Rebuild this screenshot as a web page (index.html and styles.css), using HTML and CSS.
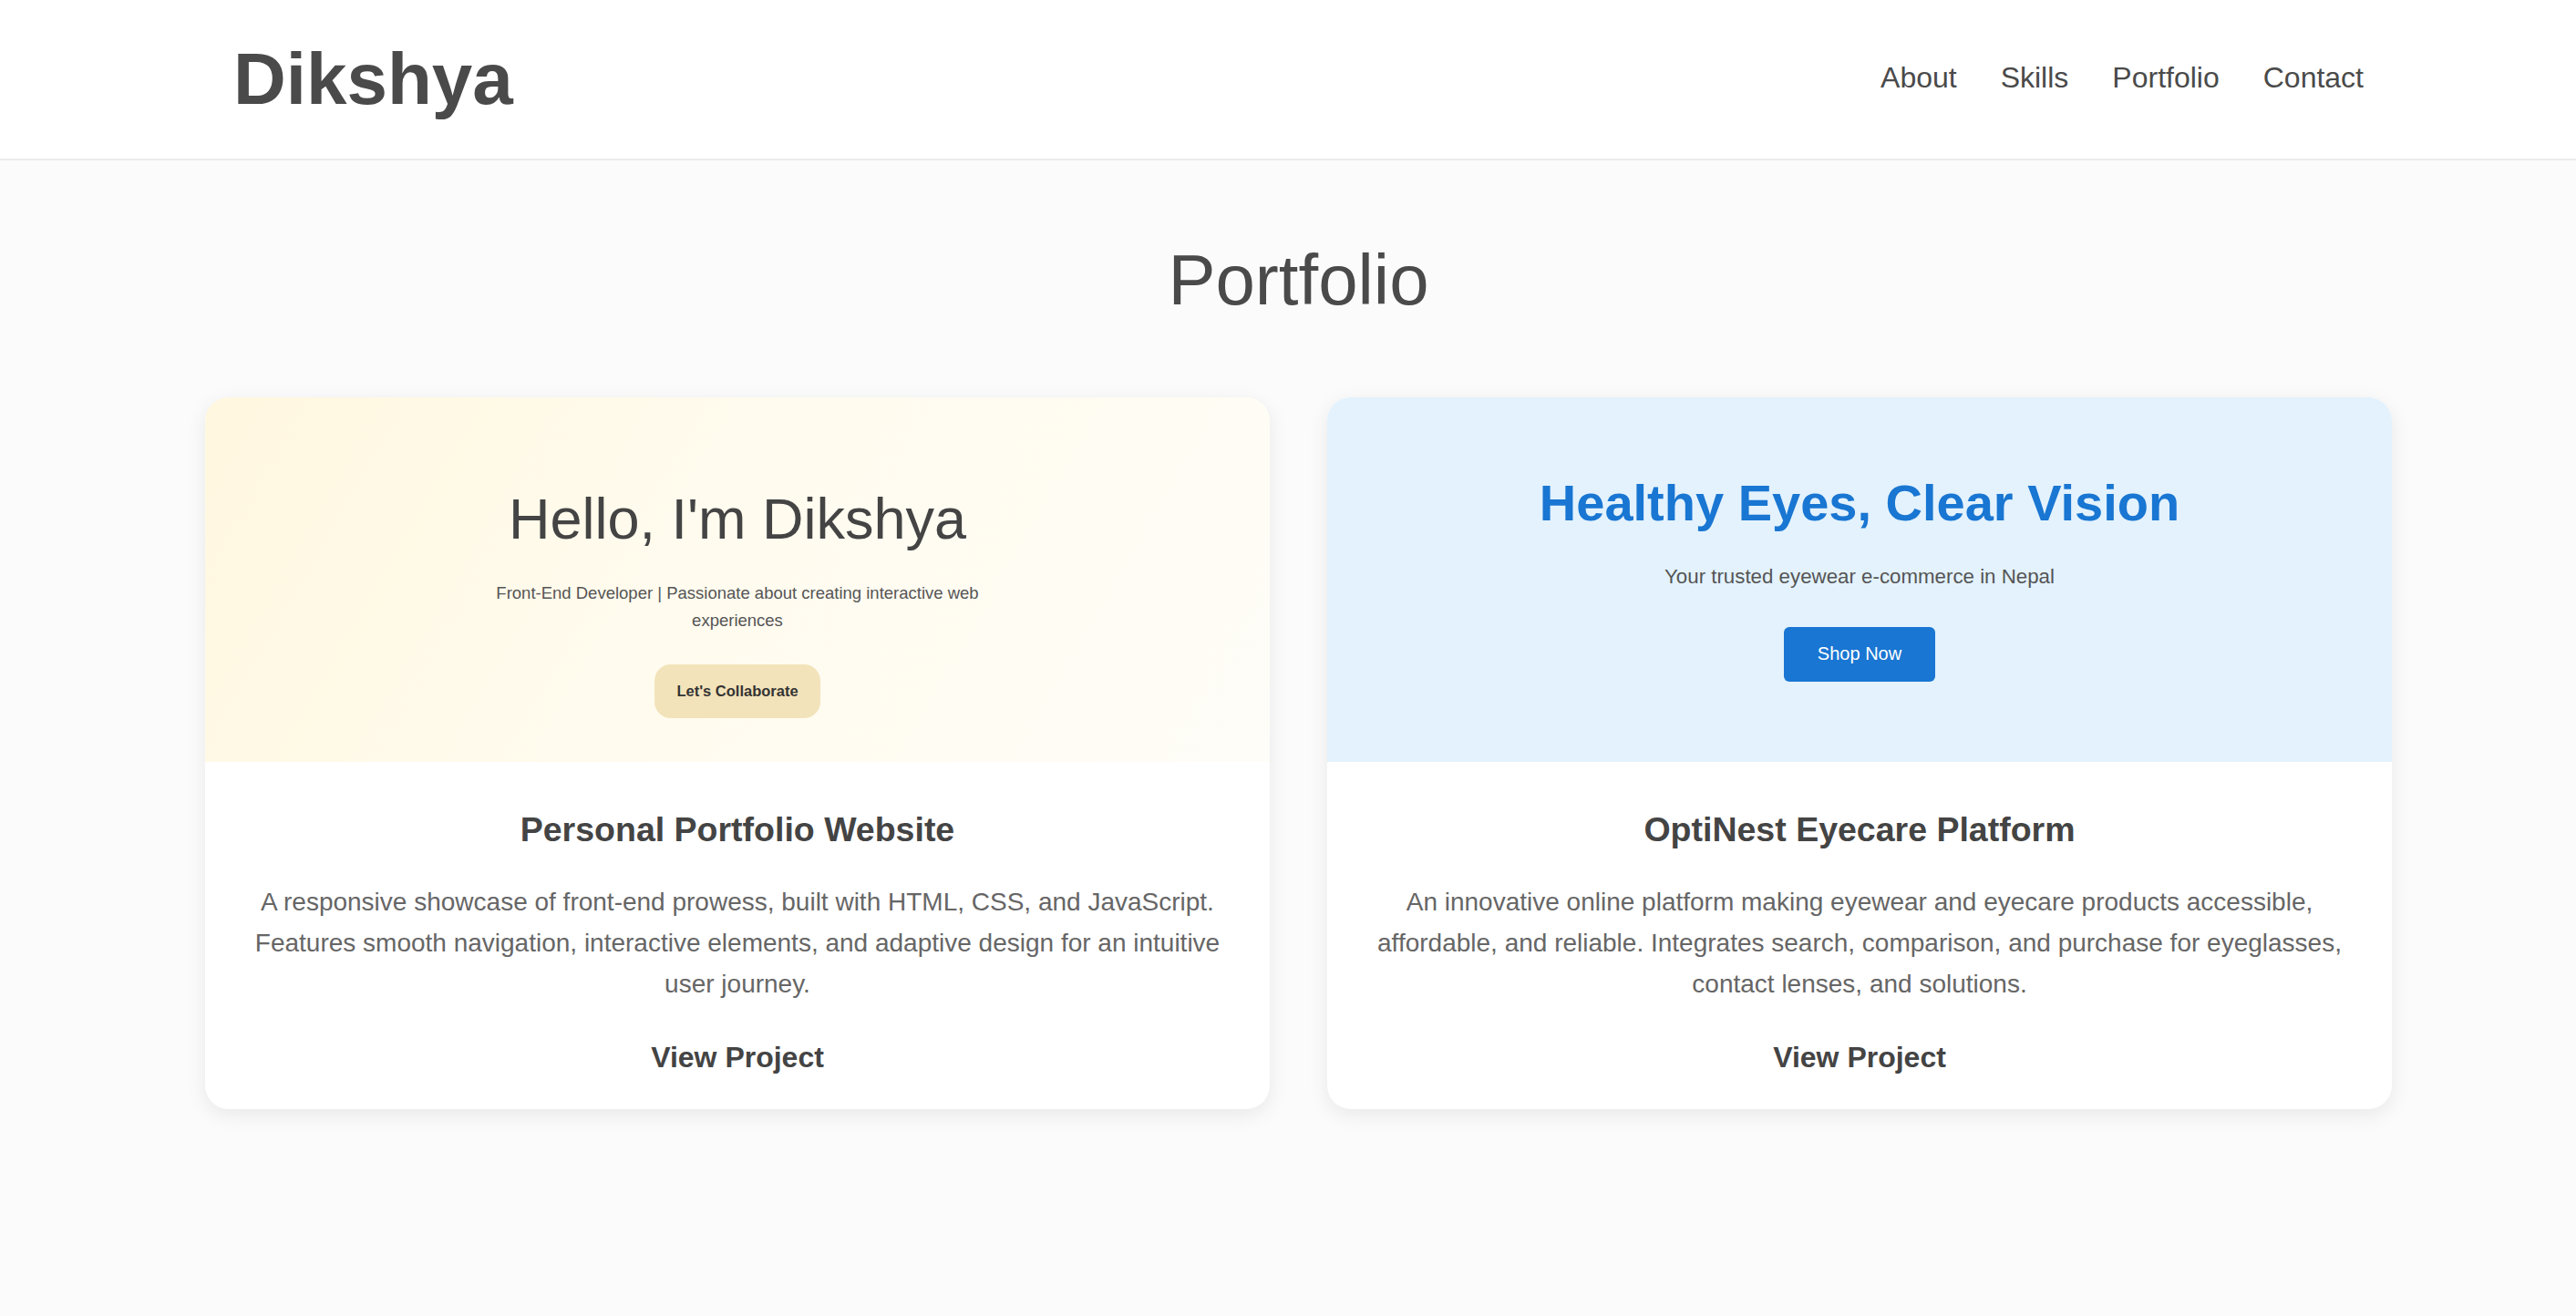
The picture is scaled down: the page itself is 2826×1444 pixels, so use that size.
FILE: index.html
```html
<!DOCTYPE html>
<html lang="en">
<head>
<meta charset="utf-8">
<title>Dikshya - Portfolio</title>
<link rel="stylesheet" href="styles.css">
</head>
<body>
<header class="site-header">
  <div class="logo">Dikshya</div>
  <nav class="nav">
    <a href="#about">About</a>
    <a href="#skills">Skills</a>
    <a href="#portfolio">Portfolio</a>
    <a href="#contact">Contact</a>
  </nav>
</header>
<main class="portfolio" id="portfolio">
  <h2 class="section-title">Portfolio</h2>
  <div class="cards">
    <article class="card">
      <div class="preview preview-personal">
        <h1 class="pp-title">Hello, I'm Dikshya</h1>
        <p class="pp-sub">Front-End Developer | Passionate about creating interactive web experiences</p>
        <span class="pp-btn">Let's Collaborate</span>
      </div>
      <div class="card-body">
        <h3 class="card-title">Personal Portfolio Website</h3>
        <p class="card-text">A responsive showcase of front-end prowess, built with HTML, CSS, and JavaScript. Features smooth navigation, interactive elements, and adaptive design for an intuitive user journey.</p>
        <a class="card-link" href="#">View Project</a>
      </div>
    </article>
    <article class="card">
      <div class="preview preview-optinest">
        <h1 class="on-title">Healthy Eyes, Clear Vision</h1>
        <p class="on-sub">Your trusted eyewear e-commerce in Nepal</p>
        <span class="on-btn">Shop Now</span>
      </div>
      <div class="card-body">
        <h3 class="card-title">OptiNest Eyecare Platform</h3>
        <p class="card-text">An innovative online platform making eyewear and eyecare products accessible, affordable, and reliable. Integrates search, comparison, and purchase for eyeglasses, contact lenses, and solutions.</p>
        <a class="card-link" href="#">View Project</a>
      </div>
    </article>
  </div>
</main>
</body>
</html>
```
FILE: styles.css
```css
* { box-sizing: border-box; }

html, body {
  margin: 0;
  padding: 0;
}

body {
  background: #fbfbfb;
  font-family: "Liberation Sans", Arial, sans-serif;
  color: #4a4a4a;
}

.site-header {
  background: #ffffff;
  border-bottom: 2px solid #ececec;
  display: flex;
  align-items: center;
  justify-content: space-between;
  padding: 41px 233px 41px 256px;
}

.logo {
  font-size: 80px;
  font-weight: bold;
  color: #4a4a4a;
  line-height: normal;
}

.nav {
  display: flex;
  gap: 48px;
  padding-bottom: 3px;
}

.nav a {
  font-size: 32px;
  color: #4a4a4a;
  text-decoration: none;
}

.portfolio {
  padding: 86px 202px 80px 225px;
}

.section-title {
  margin: 0 0 83px;
  text-align: center;
  font-size: 78px;
  font-weight: normal;
  color: #4a4a4a;
  line-height: normal;
}

.cards {
  display: grid;
  grid-template-columns: 1fr 1fr;
  gap: 63px;
}

.card {
  background: #ffffff;
  border-radius: 26px;
  overflow: hidden;
  box-shadow: 0 6px 22px rgba(0, 0, 0, 0.08);
}

.preview {
  height: 400px;
  display: flex;
  flex-direction: column;
  align-items: center;
  text-align: center;
}

.preview-personal {
  background: linear-gradient(120deg, #fff7df 0%, #fffbee 45%, #fffdf8 100%);
  padding-top: 97px;
}

.pp-title {
  margin: 0;
  font-size: 63px;
  font-weight: normal;
  color: #444444;
  line-height: normal;
}

.pp-sub {
  margin: 31px 0 33px;
  max-width: 560px;
  font-size: 18.5px;
  line-height: 30px;
  color: #555555;
}

.pp-btn {
  display: inline-block;
  background: #f3e3ba;
  color: #333333;
  font-weight: bold;
  font-size: 16.5px;
  line-height: 19px;
  padding: 20px 24px;
  border-radius: 18px;
}

.preview-optinest {
  background: #e3f2fd;
  justify-content: center;
  padding-bottom: 6px;
}

.on-title {
  margin: 0;
  font-size: 56px;
  font-weight: bold;
  color: #1976d2;
  line-height: normal;
}

.on-sub {
  margin: 36px 0 42px;
  font-size: 22.3px;
  color: #555555;
  line-height: normal;
}

.on-btn {
  display: inline-block;
  background: #1976d2;
  color: #ffffff;
  font-size: 20px;
  line-height: 23px;
  padding: 18px 37px 19px;
  border-radius: 6px;
}

.card-body {
  padding: 53px 54px 38px;
  text-align: center;
}

.card-title {
  margin: 0 0 36px;
  font-size: 37.5px;
  font-weight: bold;
  color: #444444;
  line-height: normal;
}

.card-text {
  margin: 0 0 40px;
  font-size: 28px;
  line-height: 44.8px;
  color: #666666;
}

.card-link {
  display: inline-block;
  font-size: 32px;
  font-weight: bold;
  color: #444444;
  text-decoration: none;
  line-height: normal;
}
```
